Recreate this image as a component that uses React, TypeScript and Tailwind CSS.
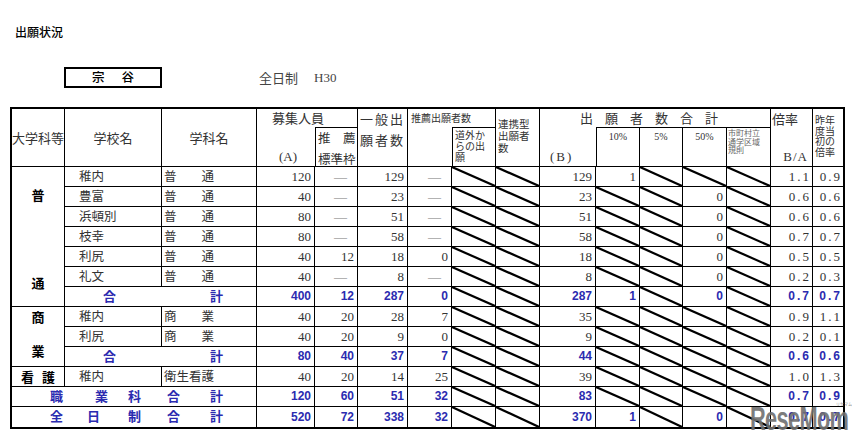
import React from 'react';

type Val = string | null;
interface DataRow {
  kind: 'normal' | 'total' | 'grand';
  school?: string;
  dept?: string;
  vals: Val[];
}

const D = null;

const rows: DataRow[] = [
  { kind: 'normal', school: '稚内', dept: '普　　通', vals: ['120', '—', '129', '—', D, D, '129', '1', D, D, D, '1.1', '0.9'] },
  { kind: 'normal', school: '豊富', dept: '普　　通', vals: ['40', '—', '23', '—', D, D, '23', D, D, '0', D, '0.6', '0.6'] },
  { kind: 'normal', school: '浜頓別', dept: '普　　通', vals: ['80', '—', '51', '—', D, D, '51', D, D, '0', D, '0.6', '0.6'] },
  { kind: 'normal', school: '枝幸', dept: '普　　通', vals: ['80', '—', '58', '—', D, D, '58', D, D, '0', D, '0.7', '0.7'] },
  { kind: 'normal', school: '利尻', dept: '普　　通', vals: ['40', '12', '18', '0', D, D, '18', D, D, '0', D, '0.5', '0.5'] },
  { kind: 'normal', school: '礼文', dept: '普　　通', vals: ['40', '—', '8', '—', D, D, '8', D, D, '0', D, '0.2', '0.3'] },
  { kind: 'total', vals: ['400', '12', '287', '0', D, D, '287', '1', D, '0', D, '0.7', '0.7'] },
  { kind: 'normal', school: '稚内', dept: '商　　業', vals: ['40', '20', '28', '7', D, D, '35', D, D, D, D, '0.9', '1.1'] },
  { kind: 'normal', school: '利尻', dept: '商　　業', vals: ['40', '20', '9', '0', D, D, '9', D, D, D, D, '0.2', '0.1'] },
  { kind: 'total', vals: ['80', '40', '37', '7', D, D, '44', D, D, D, D, '0.6', '0.6'] },
  { kind: 'normal', school: '稚内', dept: '衛生看護', vals: ['40', '20', '14', '25', D, D, '39', D, D, D, D, '1.0', '1.3'] },
  { kind: 'grand', vals: ['120', '60', '51', '32', D, D, '83', D, D, D, D, '0.7', '0.9'] },
  { kind: 'grand', vals: ['520', '72', '338', '32', D, D, '370', '1', D, '0', D, '0.7', '0.7'] },
];

function Diag() {
  return (
    <svg className="absolute inset-0 w-full h-full" viewBox="0 0 100 100" preserveAspectRatio="none">
      <line x1="0" y1="0" x2="100" y2="100" stroke="#000" strokeWidth="2.2" vectorEffect="non-scaling-stroke" />
    </svg>
  );
}

const blue = "text-[#2b2bb0] font-['Liberation_Sans','Noto_Sans_CJK_JP',sans-serif] font-bold";
const serifNum = "font-['Liberation_Serif','Noto_Sans_CJK_JP',serif] text-[#333]";

function GrandLabel({ chars, margins }: { chars: string[]; margins: string[] }) {
  return (
    <div className={`flex items-center text-[13px] ${blue}`}>
      {chars.map((c, i) => (
        <span key={i} className={margins[i]}>
          {c}
        </span>
      ))}
    </div>
  );
}

export default function App() {
  const cells: React.ReactNode[] = [];

  rows.forEach((r, i) => {
    const last = i === rows.length - 1;
    const bb = last ? '' : 'border-b';
    if (i === 0) {
      cells.push(
        <div key={`g${i}`} className="row-span-7 border-r border-b border-black flex flex-col items-center justify-between pt-[20px] pb-[15px] text-[13px] leading-[16px] font-bold text-black">
          <span>普</span>
          <span>通</span>
        </div>
      );
    }
    if (i === 7) {
      cells.push(
        <div key={`g${i}`} className="row-span-3 border-r border-b border-black flex flex-col items-center justify-between pt-[2px] pb-[7px] text-[13px] leading-[16px] font-bold text-black">
          <span>商</span>
          <span>業</span>
        </div>
      );
    }
    if (i === 10) {
      cells.push(
        <div key={`g${i}`} className="border-r border-b border-black flex items-center justify-center gap-[8px] text-[13px] font-bold text-black">
          <span>看</span>
          <span>護</span>
        </div>
      );
    }
    if (r.kind === 'grand') {
      const isJob = i === 11;
      cells.push(
        <div key={`n${i}`} className={`col-span-3 border-r ${bb} border-black flex items-center`}>
          {isJob ? (
            <GrandLabel chars={['職', '業', '科', '合', '計']} margins={['ml-[38px]', 'ml-[32px]', 'ml-[20px]', 'ml-[26px]', 'ml-[30px]']} />
          ) : (
            <GrandLabel chars={['全', '日', '制', '合', '計']} margins={['ml-[38px]', 'ml-[24px]', 'ml-[28px]', 'ml-[26px]', 'ml-[30px]']} />
          )}
        </div>
      );
    } else if (r.kind === 'total') {
      cells.push(
        <div key={`n${i}`} className="col-span-2 border-r border-b border-black flex items-center">
          <GrandLabel chars={['合', '計']} margins={['ml-[38px]', 'ml-[94px]']} />
        </div>
      );
    } else {
      cells.push(
        <div key={`s${i}`} className="border-r border-b border-black flex items-center pl-[14px] text-[12.5px] text-[#333]">
          {r.school}
        </div>
      );
      cells.push(
        <div key={`d${i}`} className="border-r border-b border-black flex items-center pl-[2px] text-[12.5px] text-[#333] whitespace-nowrap">
          {r.dept}
        </div>
      );
    }
    const isBlue = r.kind !== 'normal';
    r.vals.forEach((v, j) => {
      const lastCol = j === r.vals.length - 1;
      const br = lastCol ? '' : 'border-r';
      const ratio = j >= 11;
      if (v === null) {
        cells.push(
          <div key={`v${i}-${j}`} className={`relative ${br} ${bb} border-black`}>
            <Diag />
          </div>
        );
        return;
      }
      const isDash = v === '—';
      const font = isBlue ? `${blue} text-[12px]` : `${serifNum} text-[13px]`;
      const pad = isDash ? 'pr-[10px] text-[#777]' : ratio ? 'tracking-[2px] pr-[1px]' : 'pr-[3px]';
      cells.push(
        <div key={`v${i}-${j}`} className={`${br} ${bb} border-black flex items-center justify-end leading-[19px] ${font} ${pad}`}>
          {v}
        </div>
      );
    });
  });

  return (
    <div className="w-[862px] h-[443px] bg-white relative overflow-hidden text-[#333] font-['Noto_Sans_CJK_JP',sans-serif]">
      <div className="pl-[15px] pt-[24px] text-[12px] leading-[16px] text-black font-medium">出願状況</div>

      <div className="flex items-center mt-[27px] h-[21px]">
        <div className="ml-[64px] w-[98px] h-[21px] border-2 border-black flex items-center justify-center text-[12.5px] text-black font-medium">
          <span>宗</span>
          <span className="ml-[17px]">谷</span>
        </div>
        <div className="ml-[97px] text-[13px] text-[#444] flex items-center">
          <span>全日制</span>
          <span className="ml-[16px] font-['Liberation_Serif',serif]">H30</span>
        </div>
      </div>

      <div className="ml-[10px] mt-[19px] w-[835px] border-2 border-black">
        <div className="grid grid-cols-[53px_97px_95px_58px_43px_50px_44px_44px_44px_56px_44px_43px_44px_44px_42px_30px] grid-rows-[19px_39px_repeat(13,20px)]">
          {/* header row 1 */}
          <div className="row-span-2 border-r border-b border-black flex items-center justify-center text-[13px]">大学科等</div>
          <div className="row-span-2 border-r border-b border-black flex items-center justify-center text-[13px]">学校名</div>
          <div className="row-span-2 border-r border-b border-black flex items-center justify-center text-[13px]">学科名</div>
          <div className="row-span-2 border-b border-black flex flex-col justify-between text-[13px]">
            <div className="relative z-10 whitespace-nowrap pl-[15px] leading-[17px]">募集人員</div>
            <div className="pl-[22px] leading-[18px] font-['Liberation_Serif',serif]">(A)</div>
          </div>
          <div className="border-r border-b border-black"></div>
          <div className="row-span-2 border-r border-b border-black text-[13px] leading-[21px] pl-[2px] tracking-[2px] -mt-[1px]">
            一般出
            <br />
            願者数
          </div>
          <div className="row-span-2 border-b border-black">
            <div className="relative z-10 whitespace-nowrap pl-[3px] text-[10px] leading-[17px]">推薦出願者数</div>
          </div>
          <div className="border-r border-b border-black"></div>
          <div className="row-span-2 border-r border-b border-black text-[10.5px] leading-[12px] pt-[9px] pl-[2px]">
            連携型
            <br />
            出願者
            <br />
            数
          </div>
          <div className="row-span-2 border-b border-black flex flex-col justify-between">
            <div className="relative z-10 whitespace-nowrap pl-[40px] text-[13px] leading-[17px] tracking-[12px]">出願者数合計</div>
            <div className="pl-[10px] leading-[18px] text-[13px] tracking-[2px] font-['Liberation_Serif',serif]">(B)</div>
          </div>
          <div className="col-span-4 border-r border-b border-black"></div>
          <div className="row-span-2 border-r border-b border-black flex flex-col justify-between">
            <div className="pl-[1px] text-[13px] leading-[19px]">倍率</div>
            <div className="pr-[4px] text-right text-[13px] leading-[18px] tracking-[1px] font-['Liberation_Serif',serif]">B/A</div>
          </div>
          <div className="row-span-2 border-b border-black text-[10px] leading-[10.5px] pt-[6px] pl-[2px]">
            昨年
            <br />
            度当
            <br />
            初の
            <br />
            倍率
          </div>
          {/* header row 2 */}
          <div className="border-l border-r border-b border-black text-[12.5px] leading-[21px] pl-[2px] -mt-[1px] whitespace-nowrap">
            推　薦
            <br />
            標準枠
          </div>
          <div className="border-l border-r border-b border-black text-[10px] leading-[11px] pl-[2px] pt-[1px]">
            道外か
            <br />
            らの出
            <br />
            願
          </div>
          <div className="border-l border-r border-b border-black text-center text-[10px] leading-[18px] font-['Liberation_Serif',serif]">10%</div>
          <div className="border-r border-b border-black text-center text-[10px] leading-[18px] font-['Liberation_Serif',serif]">5%</div>
          <div className="border-r border-b border-black text-center text-[10px] leading-[18px] font-['Liberation_Serif',serif]">50%</div>
          <div className="border-r border-b border-black text-[8px] leading-[8.5px] pt-[1px] pl-[1px] text-[#666] whitespace-nowrap">
            市町村立
            <br />
            通学区域
            <br />
            規則
          </div>
          {cells}
        </div>
      </div>

      <div className="absolute left-[750px] top-[403px] opacity-90">
        <div className="origin-left scale-x-[0.66] text-[#707070] font-['Liberation_Sans',sans-serif] font-bold text-[33px] leading-[32px] tracking-[-1px] whitespace-nowrap">
          ReseMom
        </div>
        <span className="absolute left-[86px] -top-[1px] text-[4px] leading-[5px] text-[#888] whitespace-nowrap">リセマム</span>
      </div>
    </div>
  );
}
